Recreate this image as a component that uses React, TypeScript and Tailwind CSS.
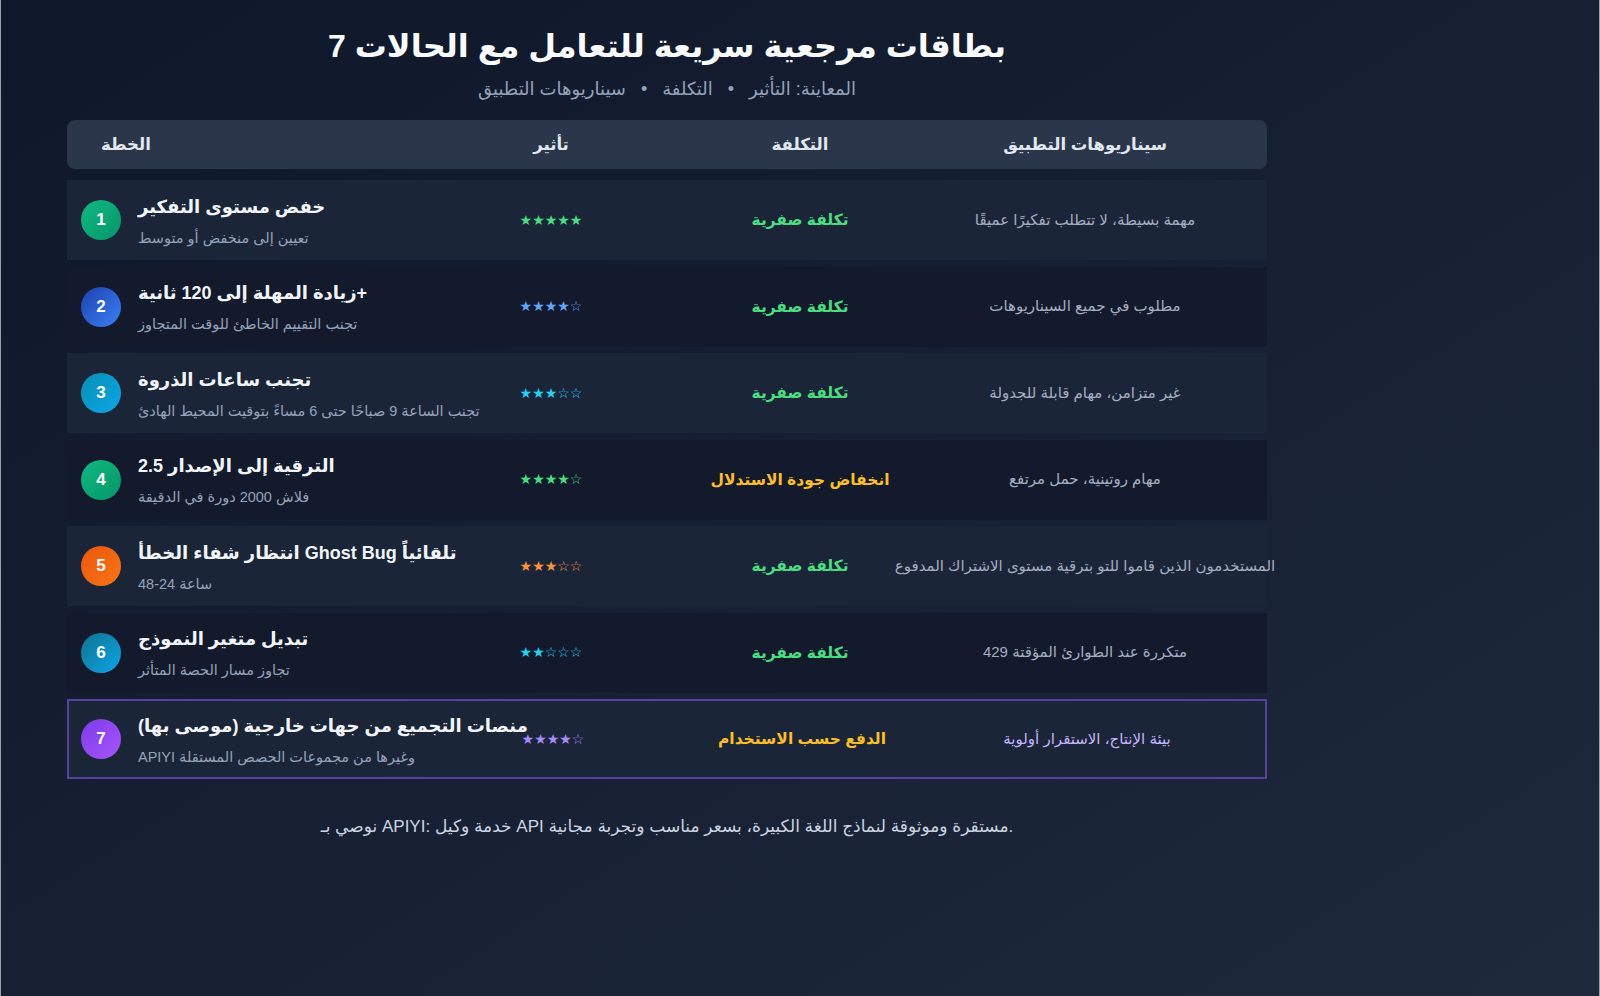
import React from "react";

type Row = {
  n: number;
  grad: string;
  title: string;
  sub: string;
  stars: number;
  starColor: string;
  cost: string;
  costColor: string;
  scen: string;
  scenColor: string;
};

const rows: Row[] = [
  {
    n: 1,
    grad: "from-[#10b981] to-[#059669]",
    title: "خفض مستوى التفكير",
    sub: "تعيين إلى منخفض أو متوسط",
    stars: 5,
    starColor: "text-[#4ade80]",
    cost: "تكلفة صفرية",
    costColor: "text-[#4ade80]",
    scen: "مهمة بسيطة، لا تتطلب تفكيرًا عميقًا",
    scenColor: "text-[#a3aec0]",
  },
  {
    n: 2,
    grad: "from-[#1e40af] to-[#3b82f6]",
    title: "+زيادة المهلة إلى 120 ثانية",
    sub: "تجنب التقييم الخاطئ للوقت المتجاوز",
    stars: 4,
    starColor: "text-[#60a5fa]",
    cost: "تكلفة صفرية",
    costColor: "text-[#4ade80]",
    scen: "مطلوب في جميع السيناريوهات",
    scenColor: "text-[#a3aec0]",
  },
  {
    n: 3,
    grad: "from-[#0891b2] to-[#0ea5e9]",
    title: "تجنب ساعات الذروة",
    sub: "تجنب الساعة 9 صباحًا حتى 6 مساءً بتوقيت المحيط الهادئ",
    stars: 3,
    starColor: "text-[#22d3ee]",
    cost: "تكلفة صفرية",
    costColor: "text-[#4ade80]",
    scen: "غير متزامن، مهام قابلة للجدولة",
    scenColor: "text-[#a3aec0]",
  },
  {
    n: 4,
    grad: "from-[#10b981] to-[#059669]",
    title: "الترقية إلى الإصدار 2.5",
    sub: "فلاش 2000 دورة في الدقيقة",
    stars: 4,
    starColor: "text-[#4ade80]",
    cost: "انخفاض جودة الاستدلال",
    costColor: "text-[#fbbf24]",
    scen: "مهام روتينية، حمل مرتفع",
    scenColor: "text-[#a3aec0]",
  },
  {
    n: 5,
    grad: "from-[#ea580c] to-[#f97316]",
    title: "تلقائياً Ghost Bug انتظار شفاء الخطأ",
    sub: "ساعة 24-48",
    stars: 3,
    starColor: "text-[#fb923c]",
    cost: "تكلفة صفرية",
    costColor: "text-[#4ade80]",
    scen: "المستخدمون الذين قاموا للتو بترقية مستوى الاشتراك المدفوع",
    scenColor: "text-[#a3aec0]",
  },
  {
    n: 6,
    grad: "from-[#0e7490] to-[#0ea5e9]",
    title: "تبديل متغير النموذج",
    sub: "تجاوز مسار الحصة المتأثر",
    stars: 2,
    starColor: "text-[#22d3ee]",
    cost: "تكلفة صفرية",
    costColor: "text-[#4ade80]",
    scen: "متكررة عند الطوارئ المؤقتة 429",
    scenColor: "text-[#a3aec0]",
  },
  {
    n: 7,
    grad: "from-[#7c3aed] to-[#a855f7]",
    title: "منصات التجميع من جهات خارجية (موصى بها)",
    sub: "وغيرها من مجموعات الحصص المستقلة APIYI",
    stars: 4,
    starColor: "text-[#a78bfa]",
    cost: "الدفع حسب الاستخدام",
    costColor: "text-[#fbbf24]",
    scen: "بيئة الإنتاج، الاستقرار أولوية",
    scenColor: "text-[#c4b5fd]",
  },
];

const cols = "grid-cols-[404px_160px_338px_232px_66px]";

function PlanRow({ r }: { r: Row }) {
  const odd = r.n % 2 === 1;
  const highlight = r.n === 7;
  return (
    <div
      className={`grid h-[80px] ${cols} items-center whitespace-nowrap ${
        odd ? "bg-[#1b2538]" : "bg-[#131a2c]"
      } ${highlight ? "border-2 border-[#5b3f9e]" : ""}`}
    >
      {/* plan */}
      <div className={`flex items-center gap-[17px] ${highlight ? "pl-[12px]" : "pl-[14px]"}`}>
        <div
          className={`flex h-10 w-10 shrink-0 items-center justify-center rounded-full bg-linear-to-br ${r.grad} text-[17px] font-bold text-white`}
        >
          {r.n}
        </div>
        <div className="flex flex-col gap-[9px] pt-[2px]">
          <p dir="rtl" className="text-left text-[18px] leading-[24px] font-bold text-[#f1f5f9]">
            {r.title}
          </p>
          <p dir="rtl" className="text-left text-[14.5px] leading-[20px] text-[#94a3b8]">
            {r.sub}
          </p>
        </div>
      </div>

      {/* stars */}
      <div className="flex justify-center">
        <span className={`text-[14px] ${r.starColor}`}>
          {"★".repeat(r.stars) + "☆".repeat(5 - r.stars)}
        </span>
      </div>

      {/* cost */}
      <div className="flex justify-center">
        <span dir="rtl" className={`text-[15.5px] font-semibold ${r.costColor}`}>
          {r.cost}
        </span>
      </div>

      {/* scenario */}
      <div className="flex justify-center">
        <span dir="rtl" className={`text-[15px] ${r.scenColor}`}>
          {r.scen}
        </span>
      </div>
      <div />
    </div>
  );
}

export default function App() {
  return (
    <div className="min-h-[996px] w-full border-x border-[#9aa0a8] bg-linear-to-br from-[#0f172a] to-[#1e293b] font-['Liberation_Sans','DejaVu_Sans',sans-serif] text-white">
      <div className="ml-[66px] w-[1200px] pt-[26px]">
        <h1 dir="rtl" className="text-center text-[32px] leading-[40px] font-bold text-[#f8fafc]">
          بطاقات مرجعية سريعة للتعامل مع الحالات 7
        </h1>
        <p
          dir="rtl"
          className="mt-[12px] text-center text-[18px] leading-[22px] whitespace-pre text-[#94a3b8]"
        >
          {"المعاينة: التأثير   •   التكلفة   •   سيناريوهات التطبيق"}
        </p>

        {/* header */}
        <div
          className={`mt-[20px] grid h-[49px] ${cols} items-center rounded-lg bg-[#2a3649] text-[16.5px] font-bold text-[#e2e8f0]`}
        >
          <div className="pl-[34px]">الخطة</div>
          <div className="flex justify-center">تأثير</div>
          <div className="flex justify-center">التكلفة</div>
          <div className="flex justify-center">
            <span dir="rtl">سيناريوهات التطبيق</span>
          </div>
          <div />
        </div>

        <div className="mt-[11px] flex flex-col gap-[6.5px]">
          {rows.map((r) => (
            <PlanRow key={r.n} r={r} />
          ))}
        </div>

        <p dir="rtl" className="mt-[36px] text-center text-[17px] leading-[24px] text-[#cbd5e1]">
          .مستقرة وموثوقة لنماذج اللغة الكبيرة، بسعر مناسب وتجربة مجانية API خدمة وكيل :APIYI نوصي بـ
        </p>
      </div>
    </div>
  );
}
